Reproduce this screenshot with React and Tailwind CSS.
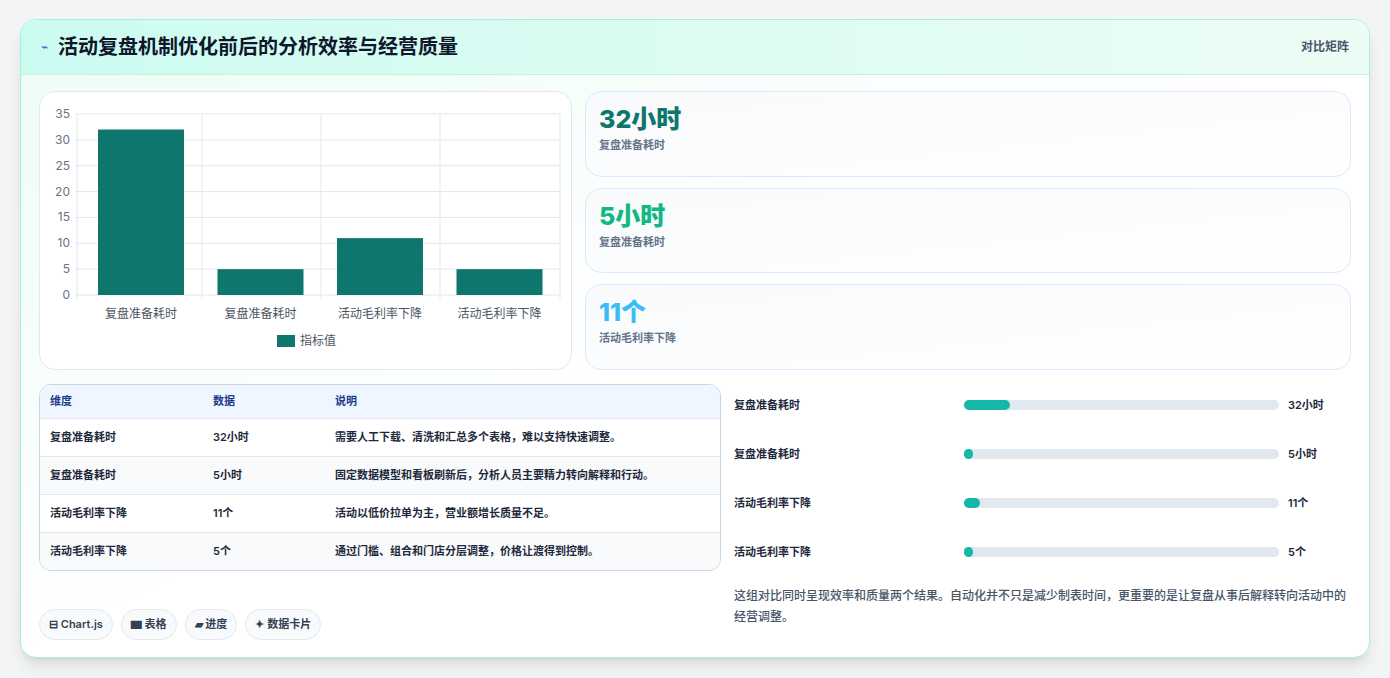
import React from 'react';

const font = { fontFamily: 'Inter, "Noto Sans CJK SC", sans-serif' };

const rows = [
  ['复盘准备耗时', '32小时', '需要人工下载、清洗和汇总多个表格，难以支持快速调整。'],
  ['复盘准备耗时', '5小时', '固定数据模型和看板刷新后，分析人员主要精力转向解释和行动。'],
  ['活动毛利率下降', '11个', '活动以低价拉单为主，营业额增长质量不足。'],
  ['活动毛利率下降', '5个', '通过门槛、组合和门店分层调整，价格让渡得到控制。'],
];

const bars = [
  ['复盘准备耗时', '32小时', 14.5],
  ['复盘准备耗时', '5小时', 3],
  ['活动毛利率下降', '11个', 5],
  ['活动毛利率下降', '5个', 3],
];

function Chart() {
  const y0 = 201, k = 181 / 35;
  const vals = [32, 5, 11, 5];
  const labels = ['复盘准备耗时', '复盘准备耗时', '活动毛利率下降', '活动毛利率下降'];
  return (
    <svg width="530" height="276" className="block">
      {[0, 5, 10, 15, 20, 25, 30, 35].map((v) => (
        <g key={v}>
          <line x1="34" x2="519" y1={y0 - v * k} y2={y0 - v * k} stroke="#e5e7eb" />
          <text x="29" y={y0 - v * k + 4} textAnchor="end" fontSize="12" fill="#6b7280">{v}</text>
        </g>
      ))}
      {[36, 161, 280, 399, 519].map((x) => (
        <line key={x} x1={x} x2={x} y1={y0 - 35 * k} y2={y0 + 4} stroke="#e5e7eb" />
      ))}
      {vals.map((v, i) => (
        <g key={i}>
          <rect x={57 + i * 119.5} y={y0 - v * k} width="86" height={v * k} fill="#0f766e" />
          <text x={100 + i * 119.5} y={y0 + 23} textAnchor="middle" fontSize="12" fill="#4b5563">{labels[i]}</text>
        </g>
      ))}
      <rect x="236" y="241" width="18" height="12" fill="#0f766e" />
      <text x="259" y="251" fontSize="12" fill="#4b5563">指标值</text>
    </svg>
  );
}

function Stat({ value, label, color }) {
  return (
    <div className="flex-1 rounded-2xl border border-[#dbeafe] bg-gradient-to-br from-[#f8fafc] to-white px-[13px] pt-[11px]">
      <div className={`text-[25px] font-extrabold leading-[32px] ${color}`}>{value}</div>
      <div className="mt-[2px] text-[11px] font-semibold text-[#64748b]">{label}</div>
    </div>
  );
}

export default function App() {
  return (
    <div style={font} className="min-h-[678px] w-[1390px] bg-[#f3f4f6] px-[20px] pt-[19px] pb-[20px]">
      <div className="overflow-hidden rounded-2xl border border-[#a7f3d0] bg-gradient-to-br from-[#ecfdf5] via-white to-white shadow-lg">
        <div className="flex h-[55px] items-center justify-between border-b border-[#c7f0e3] bg-gradient-to-r from-[#ccfbf1] to-[#ecfdf5] px-[20px]">
          <div className="flex items-center gap-[10px]">
            <span className="text-[12px] text-[#2563eb]">⌁</span>
            <span className="text-[20px] font-bold text-[#0f172a]">活动复盘机制优化前后的分析效率与经营质量</span>
          </div>
          <span className="text-[12px] font-semibold text-[#475569]">对比矩阵</span>
        </div>
        <div className="px-[18px] pt-[16px] pb-[17px]">
          <div className="flex gap-[13px]">
            <div className="h-[279px] w-[533px] rounded-2xl border border-[#e2e8f0] bg-white pt-[2px] pl-[1px]">
              <Chart />
            </div>
            <div className="flex flex-1 flex-col gap-[11px]">
              <Stat value="32小时" label="复盘准备耗时" color="text-[#0f766e]" />
              <Stat value="5小时" label="复盘准备耗时" color="text-[#10b981]" />
              <Stat value="11个" label="活动毛利率下降" color="text-[#38bdf8]" />
            </div>
          </div>
          <div className="mt-[14px] flex gap-[13px]">
            <div className="w-[682px]">
              <div className="overflow-hidden rounded-xl border border-[#cbd5e1] text-[11px] font-semibold text-[#1e293b]">
                <div className="flex h-[33px] items-center bg-[#eff6ff] text-[#1e3a8a]">
                  <div className="w-[173px] pl-[10px]">维度</div>
                  <div className="w-[122px]">数据</div>
                  <div>说明</div>
                </div>
                {rows.map((r, i) => (
                  <div key={i} className={`flex h-[38px] items-center border-t border-[#e2e8f0] ${i % 2 ? 'bg-[#f8fafc]' : 'bg-white'}`}>
                    <div className="w-[173px] pl-[10px]">{r[0]}</div>
                    <div className="w-[122px]">{r[1]}</div>
                    <div>{r[2]}</div>
                  </div>
                ))}
              </div>
              <div className="mt-[38px] flex gap-[8px] text-[11px] font-semibold text-[#334155]">
                {['⊟ Chart.js', '▆ 表格', '▰ 进度', '✦ 数据卡片'].map((t) => (
                  <span key={t} className="rounded-full border border-[#e2e8f0] bg-[#f8fafc] px-[9px] py-[6px]">{t}</span>
                ))}
              </div>
            </div>
            <div className="flex-1 pt-[13px]">
              {bars.map((b, i) => (
                <div key={i} className="flex h-[49px] items-start text-[11px] font-semibold text-[#1e293b]">
                  <div className="w-[230px]">{b[0]}</div>
                  <div className="mt-[3px] h-[10px] w-[315px] rounded-full bg-[#e2e8f0]">
                    <div className="h-full rounded-full bg-[#14b8a6]" style={{ width: `${b[2]}%` }} />
                  </div>
                  <div className="ml-[9px]">{b[1]}</div>
                </div>
              ))}
              <p className="mt-[-8px] pr-[4px] text-[12px] font-medium leading-[21px] text-[#475569]">
                这组对比同时呈现效率和质量两个结果。自动化并不只是减少制表时间，更重要的是让复盘从事后解释转向活动中的经营调整。
              </p>
            </div>
          </div>
        </div>
      </div>
    </div>
  );
}
